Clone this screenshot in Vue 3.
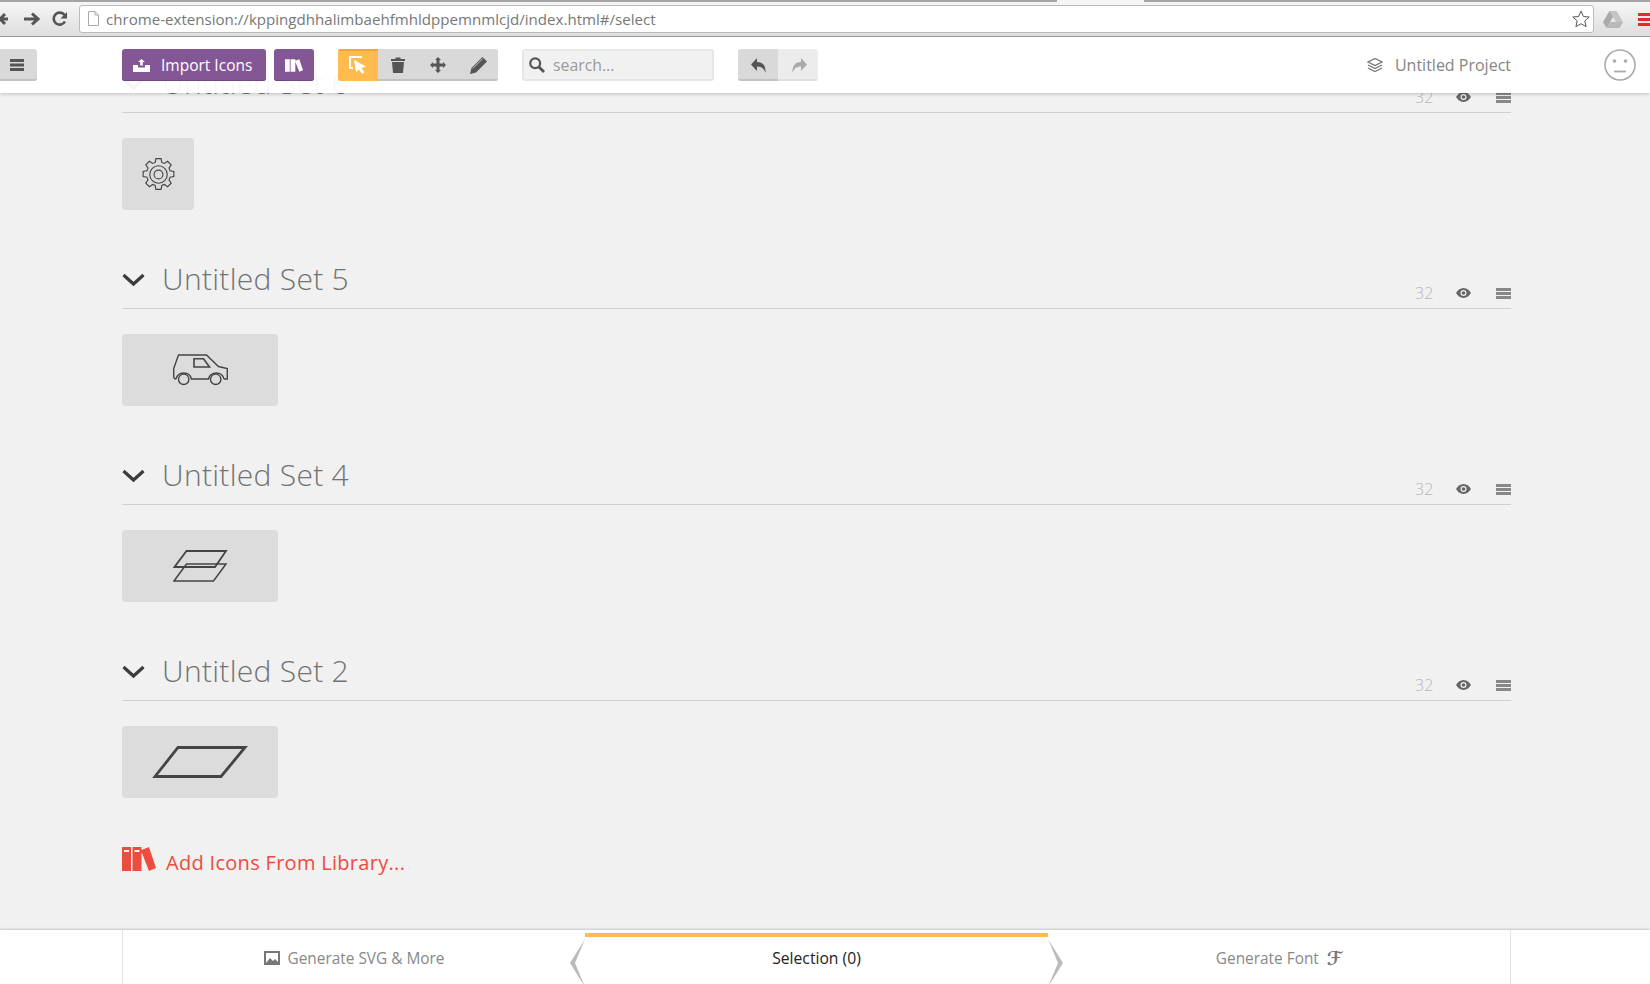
<script setup>
const sets = [
  { name: 'Untitled Set 6', icon: 'gear', wide: false },
  { name: 'Untitled Set 5', icon: 'car', wide: true },
  { name: 'Untitled Set 4', icon: 'planes', wide: true },
  { name: 'Untitled Set 2', icon: 'plane', wide: true },
]
</script>

<template>
  <div class="app">
    <div class="chrome">
      <svg class="nav back" width="10" height="16" viewBox="0 0 10 16"><path d="M9 8H1M6 3 1 8l5 5" fill="none" stroke="#555" stroke-width="3"/></svg>
      <svg class="nav fwd" width="17" height="16" viewBox="0 0 17 16"><path d="M1 8h13M9 2.500 15 8l-6 5.500" fill="none" stroke="#555" stroke-width="3"/></svg>
      <svg class="nav reload" width="16" height="16" viewBox="0 0 16 16"><path d="M13 10.500A6 6 0 1 1 12.500 4" fill="none" stroke="#555" stroke-width="2.600"/><path d="M15 1v6.500H8.500z" fill="#555"/></svg>
      <div class="omnibox">
        <svg class="page" width="11" height="15" viewBox="0 0 11 15"><path d="M.5.500h6.500l3.500 3.500v10.500H.5zM7 .5V4h3.500" fill="#fff" stroke="#aaa"/></svg>
        <span class="url">chrome-extension://kppingdhhalimbaehfmhldppemnmlcjd/index.html#/select</span>
        <svg class="star" width="18" height="18" viewBox="0 0 18 18"><path d="m9 1 2.400 5.500 5.800.5-4.400 3.900 1.300 5.800L9 13.700l-5.100 3 1.300-5.800L.8 7l5.800-.5z" fill="#fff" stroke="#555"/></svg>
      </div>
      <svg class="drive" width="20" height="17" viewBox="0 0 20 17"><path d="M6.500 0h7l6.500 11h-7z" fill="#c4c4c4"/><path d="M6.500 0 0 11l3.500 6 6.500-11z" fill="#aaa"/><path d="M3.500 17h13l3.500-6H7z" fill="#b8b8b8"/></svg>
      <div class="menu-red"><i></i><i></i><i></i></div>
    </div>

    <div class="workspace">
      <header class="topbar">
        <button class="btn menu-btn">
          <svg width="14" height="12" viewBox="0 0 14 12"><path d="M0 0h14v3H0zM0 4.500h14v3H0zM0 9h14v3H0z" fill="#555"/></svg>
        </button>
        <button class="btn purple import">
          <svg width="17" height="13" viewBox="0 0 17 13"><path d="M0 6h5v2.500h7V6h5v7H0z" fill="#fff"/><path d="M7.200 6.500V3H5l3.500-3L12 3H9.800v3.500z" fill="#fff"/></svg>
          <span>Import Icons</span>
        </button>
        <button class="btn purple lib">
          <svg width="18" height="13" viewBox="0 0 34 24"><path d="M0 0h9v24H0zM10.500 0h9v24h-9zM19.500 3 27 0l7 21-7 3-7.500-19z" fill="#fff"/></svg>
        </button>
        <div class="group tools">
          <button class="seg active">
            <svg width="18" height="18" viewBox="0 0 18 18"><path d="M13 1H1v11h3" fill="none" stroke="#fff" stroke-width="2"/><path d="m5 4 12 6.500-4.500 1.500 3 4.500-2.500 1.500-3-4.500L7 16z" fill="#fff"/></svg>
          </button>
          <button class="seg">
            <svg width="14" height="16" viewBox="0 0 14 16"><path d="M0 2h4.500V.5h5V2H14v2H0zM1 5h12l-1 11H2z" fill="#555"/></svg>
          </button>
          <button class="seg">
            <svg width="16" height="16" viewBox="0 0 16 16"><path d="M8 0l3 3H9.500v3.500H13V5l3 3-3 3V9.500H9.500V13H11l-3 3-3-3h1.500V9.500H3V11L0 8l3-3v1.500h3.500V3H5z" fill="#555"/></svg>
          </button>
          <button class="seg">
            <svg width="17" height="17" viewBox="0 0 17 17"><path d="M12.500 0 17 4.500 6 15.500 0 17l1.500-6z" fill="#555"/><path d="m2.800 11.500 10-10" stroke="#ddd" stroke-width=".8"/></svg>
          </button>
        </div>
        <div class="search">
          <svg width="16" height="16" viewBox="0 0 16 16"><circle cx="6.200" cy="6.200" r="4.900" fill="none" stroke="#555" stroke-width="2.200"/><path d="m10 10 5 5" stroke="#555" stroke-width="2.800"/></svg>
          <span>search...</span>
        </div>
        <div class="group history">
          <button class="seg">
            <svg width="15" height="15" viewBox="0 0 15 15"><path d="M6 0v4c5 0 9 3 8.500 11C13 10.500 10.500 8.500 6 8.500V13L0 6.500z" fill="#555"/></svg>
          </button>
          <button class="seg off">
            <svg class="redo" width="15" height="15" viewBox="0 0 15 15"><path d="M9 0v4C4 4 0 7 .5 15 2 10.500 4.500 8.500 9 8.500V13l6-6.500z" fill="#aaa"/></svg>
          </button>
        </div>
        <div class="project">
          <svg width="16" height="14" viewBox="0 0 16 14"><path d="M8 .5 15 4 8 7.500 1 4zM1 7l7 3.500L15 7M1 10l7 3.500 7-3.500" fill="none" stroke="#777" stroke-width="1.300"/></svg>
          <span>Untitled Project</span>
        </div>
        <svg class="smiley" width="32" height="32" viewBox="0 0 32 32">
          <circle cx="16" cy="16" r="15" fill="none" stroke="#aaa" stroke-width="1.600"/>
          <circle cx="10.500" cy="12" r="1.800" fill="#aaa"/><circle cx="21.500" cy="12" r="1.800" fill="#aaa"/>
          <path d="M10 22.500h12" stroke="#aaa" stroke-width="1.800"/>
        </svg>
      </header>

      <main class="content">
        <section v-for="set in sets" :key="set.name" class="set">
          <div class="set-head">
            <svg class="chev" width="23" height="14" viewBox="0 0 23 14"><path d="m1.500 2 10 9 10-9" fill="none" stroke="#3c3c3c" stroke-width="3.200"/></svg>
            <h2>{{ set.name }}</h2>
            <div class="meta">
              <span class="num">32</span>
              <svg width="15" height="10" viewBox="0 0 15 10"><path d="M7.500 0C11 0 13.500 2.500 15 5c-1.500 2.500-4 5-7.500 5S1.500 7.500 0 5c1.500-2.500 4-5 7.500-5z" fill="#666"/><circle cx="7.500" cy="5" r="3" fill="#f1f1f1"/><circle cx="7.500" cy="5" r="1.800" fill="#666"/></svg>
              <svg width="15" height="11" viewBox="0 0 15 11"><path d="M0 0h15v3H0zM0 4h15v3H0zM0 8h15v3H0z" fill="#888"/></svg>
            </div>
          </div>
          <div class="tile" :class="{ wide: set.wide }">
            <svg v-if="set.icon === 'gear'" width="33" height="33" viewBox="0 0 32 32" fill="none" stroke="#444" stroke-width="1.100">
              <path d="M13.500 .6h5l.7 3.700 2.500 1 3.100-2.100 3.500 3.500-2.100 3.100 1 2.500 3.700.7v5l-3.700.7-1 2.500 2.100 3.100-3.500 3.500-3.100-2.100-2.500 1-.7 3.700h-5l-.7-3.700-2.500-1-3.100 2.100-3.500-3.500 2.100-3.100-1-2.500-3.700-.7v-5l3.700-.7 1-2.500-2.100-3.100 3.500-3.500 3.100 2.100 2.500-1z"/>
              <circle cx="16" cy="16" r="8.500"/><circle cx="16" cy="16" r="4.300"/>
            </svg>
            <svg v-else-if="set.icon === 'car'" width="55" height="32" viewBox="0 0 55 32" fill="none" stroke="#444" stroke-width="1.400">
              <path d="M3 25C1.500 25 .7 24 .7 22v-7.500L5.500 1h28l12 11.500 8.800 2V25H51"/>
              <path d="M3 25A8 8 0 0 1 18.500 25h17A8 8 0 0 1 51 25"/>
              <path d="M21 4.800h9.500l6 8.200H21z" stroke-width="1.600"/>
              <circle cx="10.700" cy="25.300" r="5.200"/>
              <circle cx="42.700" cy="25.300" r="5.200"/>
            </svg>
            <svg v-else-if="set.icon === 'planes'" width="55" height="32" viewBox="0 0 55 32" fill="none" stroke="#444">
              <path d="M13.500 1H53L42 17H1.500z" stroke-width="1.800"/>
              <path d="M13.500 14H53L40.500 31H1z" stroke-width="1.500"/>
            </svg>
            <svg v-else width="96" height="32" viewBox="0 0 96 32" fill="none" stroke="#444" stroke-width="2.800">
              <path d="M26 1.500h67L69 30.500H3z"/>
            </svg>
          </div>
        </section>
        <a class="add-link">
          <svg width="34" height="24" viewBox="0 0 34 24">
            <path d="M0 0h9v24H0zM10.500 0h9v24h-9zM19.500 3 27 0l7 21-7 3-7.500-19z" fill="#ed4c3e"/>
            <path d="M2 3h5v2H2zM12.500 3h5v2h-5z" fill="#f1f1f1"/>
          </svg>
          <span>Add Icons From Library...</span>
        </a>
      </main>
    </div>

    <footer class="footer">
      <div class="tab left">
        <svg width="16" height="14" viewBox="0 0 16 14"><path d="M0 0h16v14H0z" fill="#777"/><path d="M2 2h12v10H2z" fill="#fff"/><path d="m2 12 4-5 3 3 2-2 3 3v1z" fill="#777"/></svg>
        <span>Generate SVG &amp; More</span>
      </div>
      <div class="tab center">
        <svg class="wing wing-l" width="15" height="48" viewBox="0 0 15 48"><path d="M15 0 0 24l15 24L5 24z" fill="#bbb"/></svg>
        <span>Selection (0)</span>
        <svg class="wing wing-r" width="15" height="48" viewBox="0 0 15 48"><path d="m0 0 15 24L0 48l10-24z" fill="#bbb"/></svg>
      </div>
      <div class="tab right">
        <span>Generate Font</span>
        <span class="f-glyph">ℱ</span>
      </div>
    </footer>
  </div>
</template>

<style>
html, body { margin: 0; overflow: hidden; background: #f1f1f1; }
</style>

<style scoped>
.app {
  width: 1650px;
  height: 984px;
  display: flex;
  flex-direction: column;
  overflow: hidden;
  font-family: "Open Sans", "Noto Sans", sans-serif;
  background: #f1f1f1;
}
button { border: 0; padding: 0; margin: 0; font: inherit; }

.chrome {
  height: 34px;
  flex: none;
  display: flex;
  align-items: center;
  border-top: 2px solid #a4a4a4;
  border-bottom: 1px solid #999;
  box-sizing: content-box;
  background: linear-gradient(#f6f6f6, #dedede);
  position: relative;
}
.chrome::before {
  content: "";
  position: absolute;
  left: 1057px;
  top: -2px;
  width: 87px;
  height: 2px;
  background: #f4f4f4;
}
.nav { flex: none; }
.back { margin-left: -1px; }
.fwd { margin-left: 14px; }
.reload { margin-left: 12px; }
.omnibox {
  margin-left: 11px;
  width: 1522px;
  height: 26px;
  margin-top: -1px;
  display: flex;
  align-items: center;
  background: #fff;
  border: 1px solid #bbb;
  border-radius: 3px;
  box-sizing: content-box;
}
.page { margin-left: 8px; flex: none; }
.url {
  margin-left: 7px;
  font-size: 15.100px;
  color: #777;
  white-space: nowrap;
  flex: 1;
}
.star { margin-right: 3px; flex: none; }
.drive { margin-left: 9px; flex: none; }
.menu-red {
  margin-left: 15px;
  width: 12px;
  display: flex;
  flex-direction: column;
  gap: 2px;
  flex: none;
}
.menu-red i { height: 3px; background: #e32b2b; display: block; }

.workspace {
  flex: 1;
  position: relative;
  overflow: hidden;
  min-height: 0;
}
.topbar {
  position: absolute;
  left: 0;
  top: 0;
  right: 0;
  height: 56px;
  z-index: 2;
  display: flex;
  align-items: center;
  background: rgba(255, 255, 255, .95);
  box-shadow: 0 1px 4px rgba(0, 0, 0, .2);
}
.btn {
  height: 32px;
  display: flex;
  align-items: center;
  justify-content: center;
  border-radius: 3px;
  flex: none;
}
.menu-btn {
  width: 37px;
  margin-right: 85px;
  background: #d9d9d9;
  border-radius: 0 3px 3px 0;
  box-shadow: inset 0 -2px 0 #c2c2c2;
  padding-right: 3px;
  box-sizing: border-box;
}
.purple { background: #835695; color: #fff; box-shadow: inset 0 -1px 0 #6f4780; }
.import {
  width: 144px;
  gap: 11px;
  font-size: 15.500px;
  font-weight: 500;
  justify-content: flex-start;
  padding-left: 11px;
  box-sizing: border-box;
}
.lib { width: 40px; margin-left: 8px; }
.group {
  display: flex;
  height: 32px;
  border-radius: 3px;
  overflow: hidden;
  flex: none;
}
.tools { margin-left: 24px; background: #d9d9d9; }
.seg {
  width: 40px;
  height: 32px;
  display: flex;
  align-items: center;
  justify-content: center;
  background: #d9d9d9;
  box-shadow: inset 0 -2px 0 #c2c2c2;
}
.seg.active { background: #ffbb4d; box-shadow: inset 0 2px 0 #eda93c; }
.seg.off { background: #ececec; box-shadow: inset 0 -2px 0 #e0e0e0; }
.redo { margin-left: 2px; }
.search {
  margin-left: 24px;
  width: 192px;
  height: 32px;
  display: flex;
  align-items: center;
  gap: 8px;
  padding-left: 5px;
  box-sizing: border-box;
  background: #f1f1f1;
  border: 2px solid #e6e6e6;
  border-radius: 3px;
  color: #999;
  font-size: 15.800px;
  flex: none;
}
.history { margin-left: 24px; }
.project {
  margin-left: auto;
  display: flex;
  align-items: center;
  gap: 12px;
  color: #858585;
  font-size: 16px;
}
.smiley { margin-left: 93px; margin-right: 14px; flex: none; }

.content {
  padding: 2px 139px 0 122px;
}
.set { padding-bottom: 25px; }
.set-head {
  height: 74px;
  box-sizing: border-box;
  display: flex;
  align-items: flex-end;
  border-bottom: 1px solid #d0d0d0;
  margin-bottom: 25px;
}
.chev { margin-bottom: 21px; flex: none; }
h2 {
  margin: 0 0 9px 17px;
  font-size: 30px;
  letter-spacing: .3px;
  line-height: 40px;
  font-weight: 300;
  color: #737373;
}
.meta {
  margin-left: auto;
  margin-bottom: 5px;
  height: 20px;
  display: flex;
  align-items: center;
}
.num { color: #b8b8b8; font-size: 16px; font-weight: 300; width: 17px; margin-right: 24px; }
.meta svg:last-child { margin-left: 25px; }
.tile {
  width: 72px;
  height: 72px;
  display: flex;
  align-items: center;
  justify-content: center;
  background: #dcdcdc;
  border-radius: 4px;
}
.tile.wide { width: 156px; }
.add-link {
  display: flex;
  align-items: flex-start;
  margin-top: 24px;
  gap: 10px;
  color: #ed4c3e;
  font-size: 20px;
  letter-spacing: .3px;
}
.add-link span { line-height: 32px; }

.footer {
  height: 54px;
  flex: none;
  display: grid;
  grid-template-columns: repeat(3, 463px);
  padding: 0 139px 0 122px;
  background: #fff;
  box-shadow: 0 -1px 2px rgba(0, 0, 0, .18);
  position: relative;
  z-index: 1;
}
.tab {
  display: flex;
  align-items: center;
  justify-content: center;
  gap: 8px;
  font-size: 15.400px;
  color: #888;
  position: relative;
  padding-top: 2px;
  box-sizing: border-box;
}
.left { border-left: 1px solid #e4e4e4; }
.right { border-right: 1px solid #e4e4e4; }
.center { color: #222; border-top: 4px solid #ffbb4d; margin-top: 3px; padding-top: 0; padding-bottom: 5px; height: 51px; font-size: 15.700px; }
.wing { position: absolute; top: 2px; }
.wing-l { left: -15px; }
.wing-r { right: -15px; }
.f-glyph {
  font-family: "DejaVu Serif", "DejaVu Sans", serif;
  font-size: 19px;
  font-weight: 700;
  line-height: 1;
  color: #777;
}
</style>
